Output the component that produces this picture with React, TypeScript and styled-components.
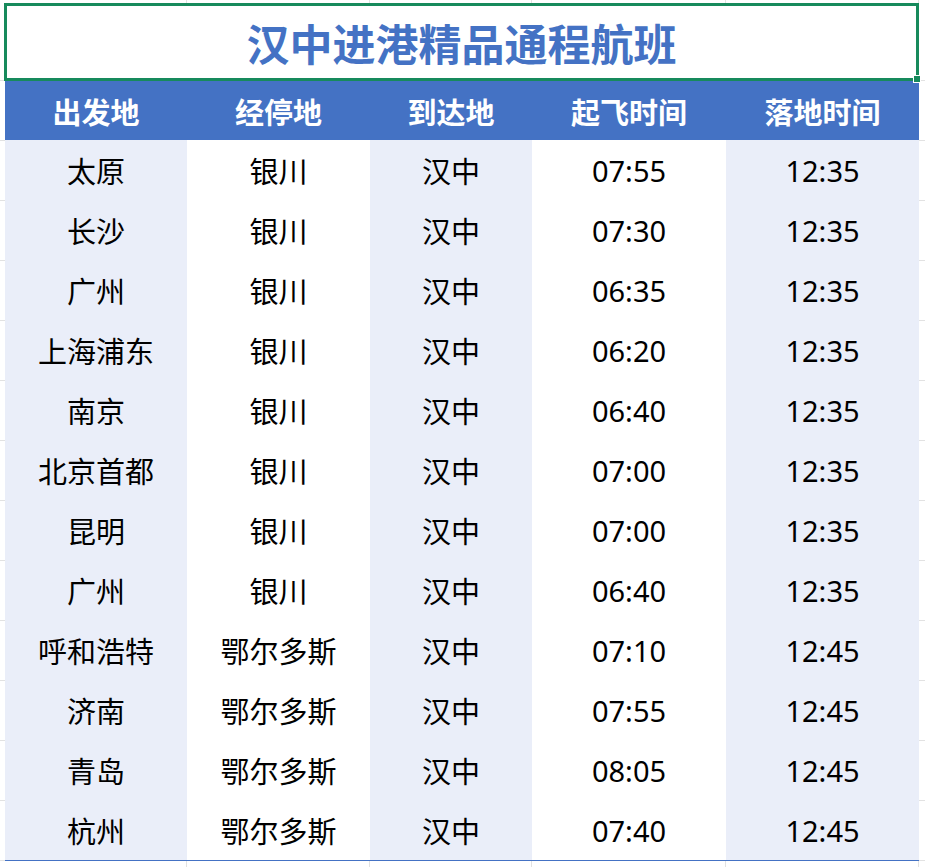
import React from "react";
import styled, { createGlobalStyle } from "styled-components";

const GlobalStyle = createGlobalStyle`
  html, body {
    margin: 0;
    padding: 0;
  }
  body {
    width: 925px;
    height: 867px;
    overflow: hidden;
    font-family: "Noto Sans", "Noto Sans CJK SC", sans-serif;
    background-color: #ffffff;
    background-image:
      linear-gradient(to right, transparent 186px, #e2e2e2 186px, #e2e2e2 187px, transparent 187px),
      linear-gradient(to right, transparent 369px, #e2e2e2 369px, #e2e2e2 370px, transparent 370px),
      linear-gradient(to right, transparent 531px, #e2e2e2 531px, #e2e2e2 532px, transparent 532px),
      linear-gradient(to right, transparent 725px, #e2e2e2 725px, #e2e2e2 726px, transparent 726px),
      linear-gradient(to right, transparent 918px, #e2e2e2 918px, #e2e2e2 919px, transparent 919px),
      repeating-linear-gradient(to bottom, transparent 0, transparent 59px, #e2e2e2 59px, #e2e2e2 60px);
    background-position: 0 0, 0 0, 0 0, 0 0, 0 0, 0 21px;
  }
`;

const Sheet = styled.div`
  padding: 3px 0 0 4px;
  display: flex;
  flex-direction: column;
`;

// Title cell
const TitleBox = styled.div`
  position: relative;
  box-sizing: border-box;
  width: 915px;
  height: 78px;
  border: 3px solid #178a5c;
  background: #ffffff;
  display: flex;
  align-items: center;
  justify-content: center;
`;

const Title = styled.h1`
  margin: 0;
  font-family: "Noto Sans CJK SC", sans-serif;
  font-size: 43px;
  font-weight: 700;
  color: #4472c4;
  line-height: 1;
`;

const Handle = styled.span`
  position: absolute;
  right: -5px;
  bottom: -5px;
  width: 6px;
  height: 6px;
  background: #178a5c;
  border: 1px solid #ffffff;
`;

// Table
const Table = styled.div`
  margin-left: 1px;
  width: 914px;
  display: grid;
  grid-template-columns: 182px 183px 162px 194px 193px;
  border-bottom: 1px solid #4472c4;
`;

const HeadCell = styled.div`
  height: 59px;
  background: #4472c4;
  color: #ffffff;
  font-family: "Noto Sans CJK SC", sans-serif;
  font-weight: 700;
  font-size: 29px;
  display: flex;
  align-items: center;
  justify-content: center;
`;

const Cell = styled.div<{ $shade: boolean }>`
  height: 60px;
  background: ${({ $shade }) => ($shade ? "#eaeef9" : "#ffffff")};
  color: #000000;
  font-size: 29px;
  display: flex;
  align-items: center;
  justify-content: center;
`;

const headers = ["出发地", "经停地", "到达地", "起飞时间", "落地时间"];

const flights = [
  ["太原", "银川", "汉中", "07:55", "12:35"],
  ["长沙", "银川", "汉中", "07:30", "12:35"],
  ["广州", "银川", "汉中", "06:35", "12:35"],
  ["上海浦东", "银川", "汉中", "06:20", "12:35"],
  ["南京", "银川", "汉中", "06:40", "12:35"],
  ["北京首都", "银川", "汉中", "07:00", "12:35"],
  ["昆明", "银川", "汉中", "07:00", "12:35"],
  ["广州", "银川", "汉中", "06:40", "12:35"],
  ["呼和浩特", "鄂尔多斯", "汉中", "07:10", "12:45"],
  ["济南", "鄂尔多斯", "汉中", "07:55", "12:45"],
  ["青岛", "鄂尔多斯", "汉中", "08:05", "12:45"],
  ["杭州", "鄂尔多斯", "汉中", "07:40", "12:45"],
];

const App = () => {
  return (
    <>
      <GlobalStyle />
      <Sheet>
        <TitleBox>
          <Title>汉中进港精品通程航班</Title>
          <Handle />
        </TitleBox>
        <Table>
          {headers.map((h) => (
            <HeadCell key={h}>{h}</HeadCell>
          ))}
          {flights.map((row, r) =>
            row.map((v, c) => (
              <Cell key={`${r}-${c}`} $shade={c % 2 === 0}>
                {v}
              </Cell>
            ))
          )}
        </Table>
      </Sheet>
    </>
  );
};

export default App;
